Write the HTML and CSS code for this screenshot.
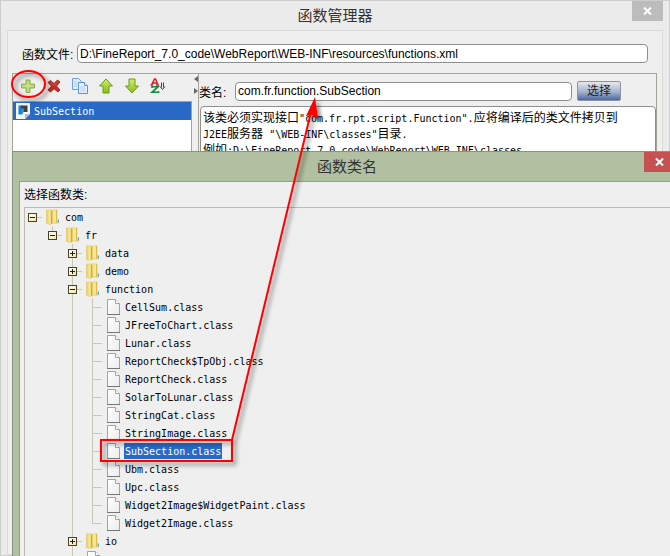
FILE: index.html
```html
<!DOCTYPE html>
<html lang="zh-CN">
  <head>
    <meta charset="utf-8" />
    <title>函数管理器</title>
    <link rel="stylesheet" href="styles.css">
  </head>
  <body>
    <svg class="sprites" aria-hidden="true">
      <defs>
        <linearGradient id="gold" x1="0" x2="1">
          <stop offset="0" stop-color="#e6cb5c" />
          <stop offset="0.6" stop-color="#f8ea9a" />
          <stop offset="1" stop-color="#d9b845" />
        </linearGradient>
        <linearGradient id="paper" x1="0" y1="0" x2="1" y2="1">
          <stop offset="0" stop-color="#ffffff" />
          <stop offset="1" stop-color="#ececec" />
        </linearGradient>
        <linearGradient id="green" x1="0" y1="0" x2="0" y2="1">
          <stop offset="0" stop-color="#d3ec6a" />
          <stop offset="1" stop-color="#86bd1c" />
        </linearGradient>
      </defs>
      <symbol id="folder" viewBox="0 0 14 16">
        <path d="M5 0.500h6.500v10l1.500 1v3H5z" fill="#ecd36c" />
        <path d="M6 1.500h4v12H6z" fill="#f6e591" />
        <path d="M0.500 1h4l1.500 1v12.500l-1.500 1-4-1z" fill="url(#gold)" stroke="#dcc05a" stroke-width="0.5" />
        <path d="M5.800 2v12.500" stroke="#c39e2c" stroke-width="0.8" />
        <path d="M10.500 1v13" stroke="#d6b746" stroke-width="0.8" />
        <path d="M12.500 10.500v3" stroke="#5ea3cc" />
      </symbol>
      <symbol id="page" viewBox="0 0 14 16">
        <path d="M1.500 0.500h8l4 4v11h-12z" fill="url(#paper)" stroke="#a3a3a3" />
        <path d="M9.500 0.500v4h4" fill="#fff" stroke="#a3a3a3" />
        <path d="M1 15.500h13" stroke="#777" />
      </symbol>
    </svg>

    <main class="window">
      <header class="title-bar">
        <h1>函数管理器</h1>
        <button class="close" aria-label="关闭">
          <svg width="9" height="8" viewBox="0 0 9 8"><path d="M1 0.500l7 7M8 0.500l-7 7" /></svg>
        </button>
      </header>

      <div class="content">
        <div class="file-row">
          <label for="file">函数文件:</label>
          <input id="file" type="text" value="D:\FineReport_7.0_code\WebReport\WEB-INF\resources\functions.xml">
        </div>

        <div class="split">
          <section class="left">
            <div class="toolbar">
              <button aria-label="添加">
                <svg width="16" height="16" viewBox="0 0 16 16"><path d="M6 2h4v4h4.500v4H10v4.500H6V10H1.500V6H6z" fill="#b4d66c" stroke="#8fae58" /><path d="M8 3.500v9M3 8h10" stroke="#cfe69a" /></svg>
              </button>
              <button aria-label="删除">
                <svg width="16" height="16" viewBox="0 0 16 16"><path d="M2 4.500L4.500 2.500 8 5.500 11.500 2 14 4 10.500 8 14 12 12 14 8 10.800 4.500 14 2 12 5.500 8z" fill="#c92c24" stroke="#8c1712" stroke-width="0.8" /><path d="M4.500 4l3.500 3.500L11.500 4" fill="none" stroke="#e0574c" /></svg>
              </button>
              <button aria-label="复制">
                <svg width="18" height="16" viewBox="0 0 18 16"><path d="M1.500 0.500h6l3 3v8h-9z" fill="#dcebfb" stroke="#6fa0db" /><path d="M7.500 4.500h6l3 3v8h-9z" fill="#e9f3fd" stroke="#5b92d5" /><path d="M13.500 4.500v3h3" fill="#fff" stroke="#5b92d5" /><path d="M9 9h5M9 11h6M9 13h6M3 4h3M3 6h3M3 8h3" stroke="#b3d0f0" /></svg>
              </button>
              <button aria-label="上移">
                <svg width="16" height="16" viewBox="0 0 16 16"><path d="M8 1l6.500 7H11v7H5V8H1.500z" fill="url(#green)" stroke="#6c9a19" stroke-linejoin="round" /></svg>
              </button>
              <button aria-label="下移">
                <svg width="16" height="16" viewBox="0 0 16 16"><path d="M8 15L1.500 8H5V1h6v7h3.500z" fill="url(#green)" stroke="#6c9a19" stroke-linejoin="round" /></svg>
              </button>
              <button aria-label="排序">
                <svg width="16" height="16" viewBox="0 0 16 16" fill="none"><path d="M1.500 7L4.500 1h1l2.500 6M3 5h4M0.500 7h2.500M6 7h3" stroke="#d6202a" stroke-width="1.500" /><path d="M2 10V8.700h6L2 14.300h6.500V13" stroke="#128a3a" stroke-width="1.600" /><path d="M11.500 4.500v5M13.500 4.500v5M10 8.500l2.500 3 2.500-3" stroke="#444" /></svg>
              </button>
            </div>
            <ul class="list">
              <li class="selected">
                <svg width="14" height="16" viewBox="0 0 14 16"><path d="M0 0h14v11l-5 5H0z" fill="#f3f5f7" /><path d="M2.500 2.500h4v9h-4z" fill="#1f7fc8" /><path d="M5 2.500h6.500V9H5z" fill="#3c4348" /><path d="M5 5.500h3V9l-3 2.500z" fill="#2b8fd6" /><path d="M9 16v-5h5z" fill="#b5bbc0" /></svg>
                <span class="mono">SubSection</span>
              </li>
            </ul>
          </section>

          <div class="splitter">
            <svg width="4" height="18" viewBox="0 0 4 18"><path d="M4 0v6L0 3zM0 12v6l4-3z" /></svg>
          </div>

          <section class="right">
            <div class="class-row">
              <label for="class-name">类名:</label>
              <input id="class-name" type="text" value="com.fr.function.SubSection">
              <button class="choose">选择</button>
            </div>
            <div class="description">
              <p>该类必须实现接口<span class="mono">"com.fr.rpt.script.Function".</span>应将编译后的类文件拷贝到</p>
              <p><span class="mono">J2EE</span>服务器<span class="mono"> "\WEB-INF\classes"</span>目录<span class="mono">.</span></p>
              <p>例如<span class="mono">:D:\FineReport_7.0_code\WebReport\WEB-INF\classes</span></p>
            </div>
          </section>
        </div>
      </div>
    </main>

    <div class="dialog" role="dialog" aria-labelledby="dialog-title">
      <header class="title-bar">
        <h2 id="dialog-title">函数类名</h2>
        <button class="close" aria-label="关闭">
          <svg width="9" height="8" viewBox="0 0 9 8"><path d="M1 0.500l7 7M8 0.500l-7 7" /></svg>
        </button>
      </header>
      <div class="dialog-body">
        <div class="dialog-label">选择函数类:</div>
        <ul class="tree">
          <li>
            <div class="row"><button class="toggle open" aria-label="折叠"></button><svg class="icon"><use href="#folder" /></svg><span class="mono">com</span></div>
            <ul>
              <li>
                <div class="row"><button class="toggle open" aria-label="折叠"></button><svg class="icon"><use href="#folder" /></svg><span class="mono">fr</span></div>
                <ul>
                  <li><div class="row"><button class="toggle" aria-label="展开"></button><svg class="icon"><use href="#folder" /></svg><span class="mono">data</span></div></li>
                  <li><div class="row"><button class="toggle" aria-label="展开"></button><svg class="icon"><use href="#folder" /></svg><span class="mono">demo</span></div></li>
                  <li>
                    <div class="row"><button class="toggle open" aria-label="折叠"></button><svg class="icon"><use href="#folder" /></svg><span class="mono">function</span></div>
                    <ul>
                      <li><div class="row"><svg class="icon"><use href="#page" /></svg><span class="mono">CellSum.class</span></div></li>
                      <li><div class="row"><svg class="icon"><use href="#page" /></svg><span class="mono">JFreeToChart.class</span></div></li>
                      <li><div class="row"><svg class="icon"><use href="#page" /></svg><span class="mono">Lunar.class</span></div></li>
                      <li><div class="row"><svg class="icon"><use href="#page" /></svg><span class="mono">ReportCheck$TpObj.class</span></div></li>
                      <li><div class="row"><svg class="icon"><use href="#page" /></svg><span class="mono">ReportCheck.class</span></div></li>
                      <li><div class="row"><svg class="icon"><use href="#page" /></svg><span class="mono">SolarToLunar.class</span></div></li>
                      <li><div class="row"><svg class="icon"><use href="#page" /></svg><span class="mono">StringCat.class</span></div></li>
                      <li><div class="row"><svg class="icon"><use href="#page" /></svg><span class="mono">StringImage.class</span></div></li>
                      <li><div class="row"><svg class="icon"><use href="#page" /></svg><span class="mono selected">SubSection.class</span></div></li>
                      <li><div class="row"><svg class="icon"><use href="#page" /></svg><span class="mono">Ubm.class</span></div></li>
                      <li><div class="row"><svg class="icon"><use href="#page" /></svg><span class="mono">Upc.class</span></div></li>
                      <li><div class="row"><svg class="icon"><use href="#page" /></svg><span class="mono">Widget2Image$WidgetPaint.class</span></div></li>
                      <li><div class="row"><svg class="icon"><use href="#page" /></svg><span class="mono">Widget2Image.class</span></div></li>
                    </ul>
                  </li>
                  <li><div class="row"><button class="toggle" aria-label="展开"></button><svg class="icon"><use href="#folder" /></svg><span class="mono">io</span></div></li>
                  <li><div class="row"><svg class="icon"><use href="#page" /></svg></div></li>
                </ul>
              </li>
            </ul>
          </li>
        </ul>
      </div>
    </div>

    <!-- red callouts -->
    <svg class="callouts" width="340" height="480" viewBox="0 0 340 480" aria-hidden="true">
      <ellipse cx="28.500" cy="84" rx="16.500" ry="13" />
      <rect x="101" y="440" width="131" height="21" />
      <path d="M232 440L311 112" />
      <path class="head" d="M315 97l3 22-6-4-6 1z" />
    </svg>
  </body>
</html>
```

FILE: styles.css
```css
* {
  box-sizing: border-box;
}

body {
  margin: 0;
  height: 100vh;
  position: relative;
  overflow: hidden;
  background: #ebebeb;
  color: #000;
  font-family: "Liberation Sans", "Noto Sans CJK SC", sans-serif;
  font-size: 12px;
}

h1,
h2,
p,
ul {
  margin: 0;
  padding: 0;
  list-style: none;
}

button {
  padding: 0;
  border: none;
  background: none;
  font-family: inherit;
}

svg {
  display: block;
}

.sprites {
  position: absolute;
  width: 0;
  height: 0;
}

.mono {
  font-family: "DejaVu Sans Mono", "Liberation Mono", monospace;
  font-size: 10px;
  white-space: pre;
}

/* main window */
.window {
  height: 100%;
  display: flex;
  flex-direction: column;
  padding: 0 6px;
  border: 1px solid #cdcdcd;
}

.title-bar {
  display: grid;
  grid-template-columns: 1fr auto 1fr;
  height: 29px;
}

.title-bar h1,
.title-bar h2 {
  grid-column: 2;
  font-size: 15px;
  font-weight: normal;
  line-height: 29px;
  color: #333;
}

.close {
  justify-self: end;
  display: flex;
  align-items: center;
  justify-content: center;
  width: 31px;
  height: 20px;
  background: #bcbcbc;
}

.close path {
  stroke: #fff;
  stroke-width: 2;
}

.content {
  flex: 1;
  display: flex;
  flex-direction: column;
  padding: 13px 5px 0 4px;
  background: #efefef;
  border: 1px solid #dadada;
}

.file-row {
  display: flex;
  align-items: center;
  padding: 0 9px 0 10px;
  margin-bottom: 10px;
}

.file-row label {
  width: 55px;
}

input {
  flex: 1;
  min-width: 0;
  height: 19px;
  padding: 0 2px;
  border: 1px solid #8e8e8e;
  border-radius: 4px;
  background: #fff;
  color: #000;
  font-family: "Liberation Sans", sans-serif;
  font-size: 12px;
}

.split {
  flex: 1;
  display: flex;
  border: 1px solid #a3a396;
}

.left {
  width: 179px;
  display: flex;
  flex-direction: column;
}

.toolbar {
  display: flex;
  height: 27px;
  padding-left: 2px;
}

.toolbar button {
  display: flex;
  align-items: center;
  justify-content: center;
  width: 26px;
  height: 24px;
}

.list {
  flex: 1;
  background: #fff;
  border: 1px solid #a3a396;
  border-left: none;
}

.list li {
  display: flex;
  align-items: center;
  gap: 4px;
  height: 18px;
  padding-left: 3px;
}

.selected {
  background: #2a6ac6;
  color: #fff;
}

.splitter {
  width: 7px;
  padding: 2px 0 0 2px;
  border-right: 1px solid #a3a396;
}

.splitter path {
  fill: #666;
}

.right {
  flex: 1;
  display: flex;
  flex-direction: column;
}

.class-row {
  display: flex;
  align-items: center;
  padding: 7px 35px 5px 0;
}

.class-row label {
  width: 36px;
}

.choose {
  width: 44px;
  height: 20px;
  margin-left: 5px;
  border: 1px solid #8a93a5;
  border-radius: 2px;
  background: linear-gradient(#e6e8ec, #a3b1cd 55%, #4d69a3);
  color: #222;
  font-size: 12px;
  line-height: 16px;
}

.description {
  flex: 1;
  margin-left: 1px;
  padding: 3px 2px;
  border: 1px solid #8e8e8e;
  border-radius: 4px;
  background: #fff;
  line-height: 16px;
}

.description p {
  height: 16px;
  white-space: nowrap;
}

/* class picker, runs past the right edge of the window */
.dialog {
  position: absolute;
  top: 151px;
  left: 12px;
  right: -5px;
  bottom: 0;
  display: flex;
  flex-direction: column;
  padding-left: 6px;
  background: #b1c0a0;
  border: 1px solid #87957a;
  border-width: 1px 0 0 1px;
}

.dialog .close {
  background: #c75050;
}

.dialog-body {
  flex: 1;
  min-height: 0;
  display: flex;
  flex-direction: column;
  padding: 4px 0 0 4px;
  background: #efefef;
  border: 1px solid #93a184;
  border-width: 1px 0 0 1px;
}

.dialog-label {
  height: 21px;
  line-height: 18px;
}

.tree {
  flex: 1;
  min-height: 0;
  padding-left: 3px;
  overflow: hidden;
  border: 1px solid #bcbca8;
  border-width: 1px 0 0 1px;
}

.tree ul {
  padding-left: 20px;
}

.tree li {
  position: relative;
}

/* connector lines */
.tree ul > li::before {
  content: "";
  position: absolute;
  left: 4px;
  top: 0;
  bottom: 0;
  border-left: 1px solid #cac8b4;
}

.tree ul > li:last-child::before {
  bottom: auto;
  height: 10px;
}

.row {
  position: relative;
  display: flex;
  align-items: center;
  gap: 4px;
  height: 18px;
  padding-left: 18px;
}

.row::before {
  content: "";
  position: absolute;
  left: 4px;
  top: 9px;
  width: 10px;
  border-top: 1px solid #cac8b4;
}

.row span {
  height: 16px;
  line-height: 18px;
  padding: 0 1px;
}

.icon {
  width: 14px;
  height: 16px;
}

.toggle {
  position: absolute;
  left: 0;
  top: 5px;
  width: 9px;
  height: 9px;
  border: 1px solid #4a4022;
  background:
    linear-gradient(#222, #222) center / 5px 1px no-repeat,
    linear-gradient(#222, #222) center / 1px 5px no-repeat,
    linear-gradient(135deg, #fff, #f0e6a6);
}

.toggle.open {
  background:
    linear-gradient(#222, #222) center / 5px 1px no-repeat,
    linear-gradient(135deg, #fff, #f0e6a6);
}

/* callouts */
.callouts {
  position: absolute;
  left: 0;
  top: 0;
  pointer-events: none;
  fill: none;
  stroke: #f00;
  stroke-width: 2;
  filter: drop-shadow(3px 3px 2px rgba(0, 0, 0, 0.5));
}

.callouts .head {
  fill: #f00;
  stroke: none;
}
```
